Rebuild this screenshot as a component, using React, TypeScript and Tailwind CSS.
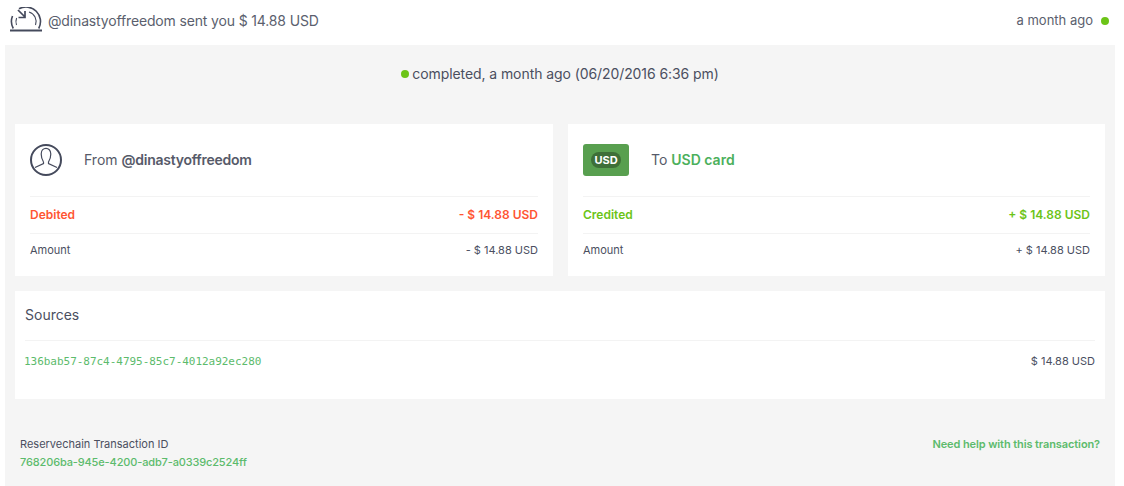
const font = { fontFamily: 'Inter, sans-serif' };

function Row({ label, value, className }: { label: string; value: React.ReactNode; className: string }) {
    return (
        <div className={`flex items-center justify-between border-t border-[#f3f3f3] ${className}`}>
            <span>{label}</span>
            <span>{value}</span>
        </div>
    );
}

function Card({ icon, title, children }: { icon: React.ReactNode; title: React.ReactNode; children: React.ReactNode }) {
    return (
        <div className="h-[152px] bg-white px-[15px]">
            <div className="flex h-[72px] items-center">
                {icon}
                <div className="pb-[2px] text-[14px] text-[#565a69]">{title}</div>
            </div>
            {children}
        </div>
    );
}

export default function App() {
    return (
        <div className="h-[486px] w-[1124px] bg-white text-[#4b4f5f]" style={font}>
            <div className="flex h-[45px] items-center justify-between pr-[15px] pb-[5px] pl-[10px]">
                <div className="flex items-center">
                    <svg width="32" height="26" viewBox="0 0 32 26" fill="none" stroke="#454a5c" className="mr-[6px]">
                        <path d="M3.3 21.5 A14.5 14.5 0 0 1 2.5 9" strokeWidth="1.6" />
                        <path d="M9 1.8 A14.5 14.5 0 0 1 28.7 21.5" strokeWidth="1.6" />
                        <path d="M6.5 18 A10 10 0 0 1 6.6 11" strokeWidth="1.1" />
                        <path d="M19 5 A10 10 0 0 1 25.5 18" strokeWidth="1.1" />
                        <path d="M8 3 L15 10 M15 4 V10.5 H8.5" strokeWidth="1.7" />
                        <path d="M0 23.5 H32" strokeWidth="2" />
                    </svg>
                    <span className="text-[14px] tracking-[-0.15px] text-[#5b5f6e]">@dinastyoffreedom sent you $ 14.88 USD</span>
                </div>
                <div className="flex items-center pt-[1px] text-[13px] text-[#5b5f6e]">
                    a month ago
                    <span className="ml-[8px] h-2 w-2 rounded-full bg-[#6cc417]" />
                </div>
            </div>
            <div className="mx-[5px] h-[441px] w-[1110px] bg-[#f5f5f5] px-[10px]">
                <div className="flex h-[79px] items-center justify-center pb-[22px] text-[14px] tracking-[-0.08px]">
                    <span className="mr-[3px] h-2 w-2 rounded-full bg-[#6cc417]" />
                    completed, a month ago (06/20/2016 6:36 pm)
                </div>
                <div className="grid grid-cols-[538px_537px] gap-x-[15px]">
                    <Card
                        title={<>From <b className="font-semibold tracking-[-0.25px]">@dinastyoffreedom</b></>}
                        icon={
                            <svg width="32" height="32" viewBox="0 0 32 32" fill="none" stroke="#454a5c" className="mr-[22px]">
                                <circle cx="16" cy="16" r="15" strokeWidth="2" />
                                <path d="M11.2 10 C11.2 2.5 20.8 2.5 20.8 10 C20.8 14 19.5 16.5 18.5 18 V19.5 L27 23.5 M13.5 18 V19.5 L5 23.5 M11.2 10 C11.2 14 12.5 16.5 13.5 18" strokeWidth="1.2" />
                            </svg>
                        }
                    >
                        <Row label="Debited" value="- $ 14.88 USD" className="h-[37px] text-[12px] font-semibold text-[#ff5533]" />
                        <Row label="Amount" value="- $ 14.88 USD" className="h-[34px] text-[11px]" />
                    </Card>
                    <Card
                        title={<>To <b className="font-semibold text-[#4cb05c]">USD card</b></>}
                        icon={
                            <div className="mr-[22px] flex h-8 w-[46px] items-center justify-center rounded-[3px] bg-[#589f4f]">
                                <span className="flex h-[16px] w-[30px] items-center justify-center rounded-full bg-[#3e6f38] text-[11px] font-bold text-white">USD</span>
                            </div>
                        }
                    >
                        <Row label="Credited" value="+ $ 14.88 USD" className="h-[37px] text-[12px] font-semibold text-[#6cc417]" />
                        <Row label="Amount" value="+ $ 14.88 USD" className="h-[34px] text-[11px]" />
                    </Card>
                </div>
                <div className="mt-[15px] h-[108px] bg-white px-[10px]">
                    <div className="flex h-[49px] items-center pb-[2px] text-[14px]">Sources</div>
                    <div className="flex h-[42px] items-center justify-between border-t border-[#f3f3f3] text-[11px]">
                        <span className="-ml-px pt-[2px] tracking-[-0.03px] text-[#5cbb6c]" style={{ fontFamily: '"DejaVu Sans Mono", monospace' }}>136bab57-87c4-4795-85c7-4012a92ec280</span>
                        <span>$ 14.88 USD</span>
                    </div>
                </div>
                <div className="flex justify-between px-[5px] pt-[38px] text-[11px]">
                    <div>
                        <div className="mb-[4px] leading-[14px]">Reservechain Transaction ID</div>
                        <div className="leading-[14px] font-medium tracking-[-0.14px] text-[#5cbb6c]">768206ba-945e-4200-adb7-a0339c2524ff</div>
                    </div>
                    <div className="leading-[14px] font-semibold tracking-[-0.1px] text-[#5cbb6c]">Need help with this transaction?</div>
                </div>
            </div>
        </div>
    );
}
